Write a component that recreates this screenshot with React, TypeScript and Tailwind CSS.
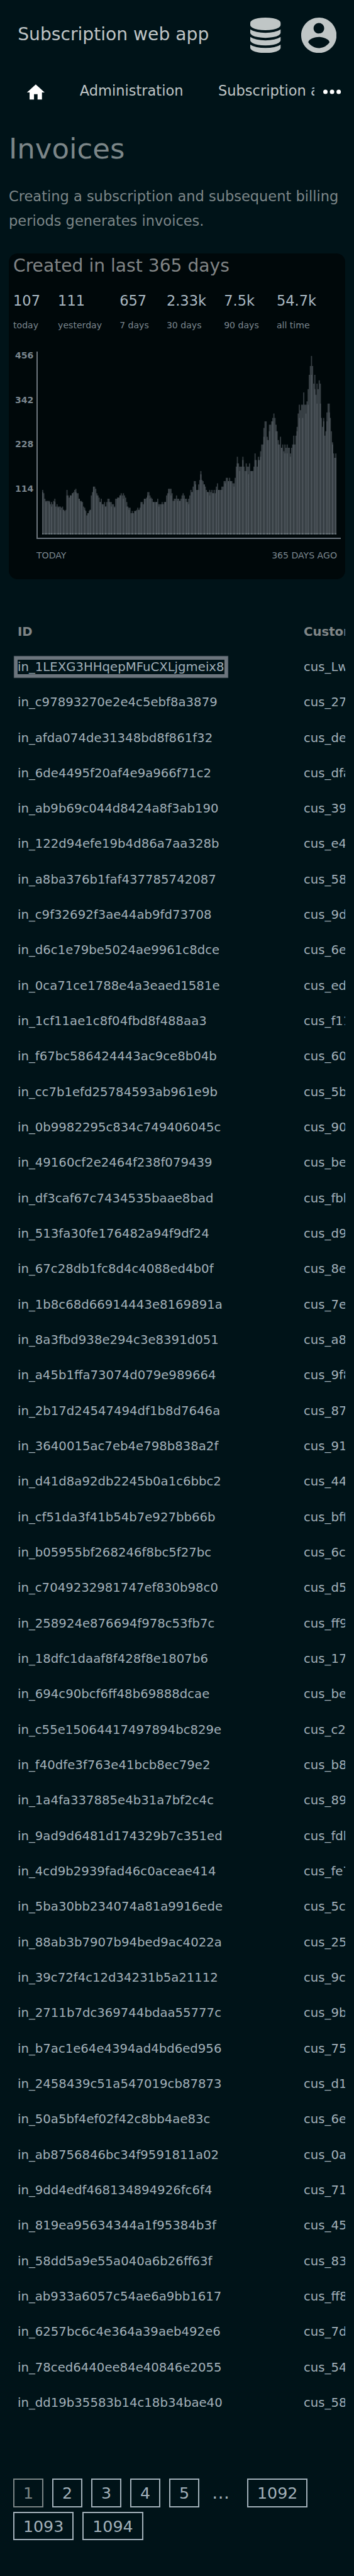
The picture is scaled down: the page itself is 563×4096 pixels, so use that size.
const invoices: [string, string][] = [
  ['in_1LEXG3HHqepMFuCXLjgmeix8', 'cus_Lw'],
  ['in_c97893270e2e4c5ebf8a3879', 'cus_27'],
  ['in_afda074de31348bd8f861f32', 'cus_de'],
  ['in_6de4495f20af4e9a966f71c2', 'cus_dfa'],
  ['in_ab9b69c044d8424a8f3ab190', 'cus_39'],
  ['in_122d94efe19b4d86a7aa328b', 'cus_e4'],
  ['in_a8ba376b1faf437785742087', 'cus_58'],
  ['in_c9f32692f3ae44ab9fd73708', 'cus_9d'],
  ['in_d6c1e79be5024ae9961c8dce', 'cus_6e'],
  ['in_0ca71ce1788e4a3eaed1581e', 'cus_ed'],
  ['in_1cf11ae1c8f04fbd8f488aa3', 'cus_f11'],
  ['in_f67bc586424443ac9ce8b04b', 'cus_60'],
  ['in_cc7b1efd25784593ab961e9b', 'cus_5b'],
  ['in_0b9982295c834c749406045c', 'cus_90'],
  ['in_49160cf2e2464f238f079439', 'cus_be'],
  ['in_df3caf67c7434535baae8bad', 'cus_fbb'],
  ['in_513fa30fe176482a94f9df24', 'cus_d9'],
  ['in_67c28db1fc8d4c4088ed4b0f', 'cus_8e'],
  ['in_1b8c68d66914443e8169891a', 'cus_7e'],
  ['in_8a3fbd938e294c3e8391d051', 'cus_a8'],
  ['in_a45b1ffa73074d079e989664', 'cus_9f8'],
  ['in_2b17d24547494df1b8d7646a', 'cus_87'],
  ['in_3640015ac7eb4e798b838a2f', 'cus_91'],
  ['in_d41d8a92db2245b0a1c6bbc2', 'cus_44'],
  ['in_cf51da3f41b54b7e927bb66b', 'cus_bff'],
  ['in_b05955bf268246f8bc5f27bc', 'cus_6c'],
  ['in_c7049232981747ef830b98c0', 'cus_d5'],
  ['in_258924e876694f978c53fb7c', 'cus_ff9'],
  ['in_18dfc1daaf8f428f8e1807b6', 'cus_17'],
  ['in_694c90bcf6ff48b69888dcae', 'cus_be'],
  ['in_c55e15064417497894bc829e', 'cus_c2'],
  ['in_f40dfe3f763e41bcb8ec79e2', 'cus_b8'],
  ['in_1a4fa337885e4b31a7bf2c4c', 'cus_89'],
  ['in_9ad9d6481d174329b7c351ed', 'cus_fdb'],
  ['in_4cd9b2939fad46c0aceae414', 'cus_fe7'],
  ['in_5ba30bb234074a81a9916ede', 'cus_5c'],
  ['in_88ab3b7907b94bed9ac4022a', 'cus_25'],
  ['in_39c72f4c12d34231b5a21112', 'cus_9c'],
  ['in_2711b7dc369744bdaa55777c', 'cus_9b'],
  ['in_b7ac1e64e4394ad4bd6ed956', 'cus_75'],
  ['in_2458439c51a547019cb87873', 'cus_d1'],
  ['in_50a5bf4ef02f42c8bb4ae83c', 'cus_6e'],
  ['in_ab8756846bc34f9591811a02', 'cus_0a'],
  ['in_9dd4edf468134894926fc6f4', 'cus_71'],
  ['in_819ea95634344a1f95384b3f', 'cus_45'],
  ['in_58dd5a9e55a040a6b26ff63f', 'cus_83'],
  ['in_ab933a6057c54ae6a9bb1617', 'cus_ff8'],
  ['in_6257bc6c4e364a39aeb492e6', 'cus_7d'],
  ['in_78ced6440ee84e40846e2055', 'cus_54'],
  ['in_dd19b35583b14c18b34bae40', 'cus_58'],
];

// Top edge of every bar; the baseline sits at 1038 and each bar is 6 units wide.
const tops = [
  798, 816, 846, 858, 858, 858, 858, 876, 864, 876, 858, 846, 888, 876, 888, 888, 888, 894, 888, 906,
  912, 906, 798, 828, 840, 828, 828, 816, 810, 798, 792, 816, 816, 846, 858, 858, 864, 888, 894, 912,
  936, 924, 912, 906, 828, 810, 798, 780, 792, 816, 828, 840, 864, 846, 888, 876, 864, 888, 864, 846,
  846, 864, 864, 876, 876, 888, 846, 846, 840, 840, 828, 816, 828, 816, 828, 840, 864, 888, 894, 894,
  924, 912, 924, 912, 912, 906, 894, 906, 894, 876, 864, 876, 864, 846, 840, 810, 810, 828, 840, 846,
  864, 864, 864, 864, 846, 876, 876, 876, 864, 876, 864, 864, 828, 816, 816, 792, 792, 816, 858, 846,
  846, 828, 846, 846, 858, 846, 828, 816, 828, 846, 846, 864, 846, 828, 798, 810, 780, 750, 750, 798,
  798, 768, 744, 696, 744, 750, 768, 780, 798, 810, 810, 798, 810, 798, 816, 798, 816, 780, 762, 798,
  798, 798, 780, 780, 750, 750, 732, 732, 750, 732, 750, 750, 762, 762, 732, 672, 618, 654, 672, 672,
  672, 618, 672, 696, 654, 672, 672, 654, 696, 696, 696, 672, 600, 636, 672, 618, 636, 588, 552, 552,
  462, 426, 426, 510, 528, 444, 444, 426, 408, 384, 408, 444, 480, 528, 552, 510, 570, 552, 588, 552,
  570, 552, 570, 570, 600, 570, 552, 504, 552, 504, 456, 384, 336, 366, 336, 336, 270, 336, 336, 318,
  252, 174, 126, 72, 126, 222, 174, 282, 222, 252, 204, 222, 408, 456, 408, 504, 480, 378, 330, 330,
  408, 480, 540, 600, 624, 600,
];

// Columns where two neighbouring days share a pixel column: [column, top of the shorter bar].
const overlaps: [number, number][] = [
  [0, 810], [3, 864], [6, 864], [8, 888], [11, 864], [14, 894], [16, 906], [19, 906], [22, 828], [25, 828],
  [27, 816], [30, 810], [33, 846], [35, 864], [38, 906], [41, 924], [43, 906], [46, 780], [49, 828], [52, 864],
  [54, 876], [57, 888], [60, 864], [62, 888], [65, 894], [68, 840], [70, 828], [73, 846], [76, 888], [78, 906],
  [81, 924], [84, 912], [87, 906], [89, 864], [92, 846], [95, 828], [97, 846], [100, 864], [103, 864], [105, 888],
  [108, 876], [111, 864], [114, 792], [116, 828], [119, 858], [122, 858], [124, 858], [127, 846], [130, 864],
  [132, 876], [135, 810], [138, 768], [141, 798], [143, 714], [146, 768], [149, 810], [151, 828], [154, 816],
  [157, 798], [159, 798], [162, 798], [165, 762], [168, 750], [170, 750], [173, 780], [176, 654], [178, 696],
  [181, 636], [184, 696], [186, 714], [189, 696], [192, 636], [195, 636], [197, 618], [200, 510], [203, 528],
  [205, 480], [208, 426], [211, 480], [213, 552], [216, 570], [219, 600], [221, 600], [224, 618], [227, 552],
  [230, 480], [232, 408], [235, 408], [238, 384], [240, 336], [243, 174], [246, 252], [248, 330], [251, 330],
  [254, 426], [257, 426], [259, 378], [262, 552], [265, 624],
];

const areaPath = `M0 1038${tops.map((t, i) => `V${t}H${(i + 1) * 6}`).join('')}V1038Z`;
const overlapPath = overlaps.map(([i, t]) => `M${i * 6} 1038V${t}h6V1038Z`).join('');
const basePath = overlaps.map(([i]) => `M${i * 6} 1032h6v6h-6Z`).join('');

const stats = [
  ['107', 'today'],
  ['111', 'yesterday'],
  ['657', '7 days'],
  ['2.33k', '30 days'],
  ['7.5k', '90 days'],
  ['54.7k', 'all time'],
];

function DatabaseIcon() {
  return (
    <svg viewBox="-128 0 1792 1792" className="size-[56.3px] fill-[#c0c6c6]">
      <path d="M768 768q237 0 443-43t325-127v170q0 69-103 128t-280 93.5-385 34.5-385-34.5-280-93.5-103-128v-170q119 84 325 127t443 43zm0 768q237 0 443-43t325-127v170q0 69-103 128t-280 93.5-385 34.5-385-34.5-280-93.5-103-128v-170q119 84 325 127t443 43zm0-384q237 0 443-43t325-127v170q0 69-103 128t-280 93.5-385 34.5-385-34.5-280-93.5-103-128v-170q119 84 325 127t443 43zm0-1152q208 0 385 34.5t280 93.5 103 128v128q0 69-103 128t-280 93.5-385 34.5-385-34.5-280-93.5-103-128v-128q0-69 103-128t280-93.5 385-34.5z" />
    </svg>
  );
}

function AccountIcon() {
  return (
    <svg viewBox="2 2 20 20" className="size-[56.3px] fill-[#c0c6c6]">
      <path d="M12 2C6.48 2 2 6.48 2 12s4.48 10 10 10 10-4.48 10-10S17.52 2 12 2zm0 3c1.66 0 3 1.34 3 3s-1.34 3-3 3-3-1.34-3-3 1.34-3 3-3zm0 14.2c-2.5 0-4.71-1.28-6-3.22.03-1.99 4-3.08 6-3.08 1.99 0 5.97 1.09 6 3.08-1.29 1.94-3.5 3.22-6 3.22z" />
    </svg>
  );
}

function Header() {
  return (
    <header className="flex h-[112.6px] items-center gap-[28.2px] px-[28.2px] text-[#bfc4c5]">
      <div className="-mt-0.5 grow text-[28.16px] leading-10">Subscription web app</div>
      <DatabaseIcon />
      <AccountIcon />
    </header>
  );
}

function Nav() {
  return (
    <nav className="flex h-[63.4px] items-center pr-[14px] pl-[39.6px] text-[22.53px] leading-8 whitespace-nowrap text-[#bfc4c5]">
      <svg viewBox="0 0 24 24" className="mt-[6px] size-[33.8px] shrink-0 fill-white">
        <path d="M10 20v-6h4v6h5v-8h3L12 3 2 12h3v8z" />
      </svg>
      <div className="ml-[53.3px] flex min-w-0 grow gap-[55.5px] overflow-hidden">
        <span>Administration</span>
        <span>Subscription administration</span>
      </div>
      <svg viewBox="0 0 24 24" className="mt-[3.5px] ml-[7px] size-[42.2px] shrink-0 fill-white">
        <circle cx="6" cy="12" r="2" />
        <circle cx="12" cy="12" r="2" />
        <circle cx="18" cy="12" r="2" />
      </svg>
    </nav>
  );
}

function CreatedCard() {
  return (
    <section className="mx-[14px] mt-[33px] h-[517.6px] rounded-[14px] bg-[#00080a] px-[7px]">
      <h2 className="text-[28.16px] leading-[40.5px] text-[#808485]">Created in last 365 days</h2>
      <div className="mt-[15.3px] flex gap-[28.1px]">
        {stats.map(([value, label]) => (
          <div key={label}>
            <div className="text-[22.53px] leading-[38.7px] text-[#a9b7c1]">{value}</div>
            <div className="mt-[8.6px] text-[14.08px] leading-[23.8px] text-[#7a868e]">{label}</div>
          </div>
        ))}
      </div>
      <div className="mt-[29.6px] flex h-[297.5px]">
        <div className="-mt-px flex w-[37px] shrink-0 flex-col pr-[4.6px] text-right text-[14.08px] leading-[14.1px] font-bold text-[#7a868e]">
          {['456', '342', '228', '114'].map((n) => (
            <div key={n} className="h-[70.4px]">
              {n}
            </div>
          ))}
        </div>
        <div className="w-[484px] border-b-2 border-l-2 border-[#6c757d] pl-[6.8px]">
          <svg viewBox="0 48 1596 990" preserveAspectRatio="none" className="h-[290.4px] w-[468px]">
            <path d={areaPath} fill="#373f44" />
            <path d={overlapPath} fill="#4f575d" />
            <path d="M0 1032H1596V1038H0Z" fill="#4f5a60" />
            <path d={basePath} fill="#7a8489" />
          </svg>
        </div>
      </div>
      <div className="mt-[15px] mr-[6px] ml-[37px] flex justify-between text-[14.08px] leading-[23.8px] text-[#7a868e]">
        <span>TODAY</span>
        <span>365 DAYS AGO</span>
      </div>
    </section>
  );
}

function InvoiceTable() {
  return (
    <div className="mx-[14px] mt-[55.3px] overflow-hidden text-[19.71px] leading-[23px] whitespace-nowrap">
      <div className="flex h-[56.33px] items-center pl-[14px] font-bold text-[#808687]">
        <div className="w-[455px] shrink-0">ID</div>
        <div>Customer</div>
      </div>
      {invoices.map(([id, customer], i) => (
        <div key={id} className="flex h-[56.33px] items-center pl-[14px] text-[#a2b0b9]">
          <div className="flex w-[455px] shrink-0">
            <a className={i === 0 ? 'shadow-[0_0_0_5.5px_#6c757d,0_0_0_6.2px_#36434b]' : ''}>{id}</a>
          </div>
          <div>{customer}</div>
        </div>
      ))}
    </div>
  );
}

function Page({ label, current = false }: { label: string; current?: boolean }) {
  return (
    <a
      className={`flex h-[45.8px] items-center border-2 px-[13.9px] ${
        current ? 'border-[#7b8586] text-[#7b8586]' : 'border-[#a2b0b9] text-[#a2b0b9]'
      }`}
    >
      {label}
    </a>
  );
}

function Pagination() {
  return (
    <div className="mx-[21px] mt-[92.3px] flex flex-wrap gap-x-[14.1px] gap-y-[7px] text-[25.34px] leading-8 text-[#a2b0b9]">
      <Page label="1" current />
      <Page label="2" />
      <Page label="3" />
      <Page label="4" />
      <Page label="5" />
      <span className="flex h-[45.8px] w-[48px] items-center pl-[6px] text-[28.16px]">…</span>
      <Page label="1092" />
      <Page label="1093" />
      <Page label="1094" />
    </div>
  );
}

export default function App() {
  return (
    <div className="h-[4096px] w-full overflow-hidden bg-[#001318] font-['DejaVu_Sans',sans-serif]">
      <Header />
      <Nav />
      <h1 className="mx-[14px] mt-[26.4px] text-[45.06px] leading-[70.4px] text-[#7c8688]">Invoices</h1>
      <p className="mx-[14px] mt-[20.6px] text-[22.53px] leading-[38.3px] text-[#7c8688]">
        Creating a subscription and subsequent billing periods generates invoices.
      </p>
      <CreatedCard />
      <InvoiceTable />
      <Pagination />
    </div>
  );
}
